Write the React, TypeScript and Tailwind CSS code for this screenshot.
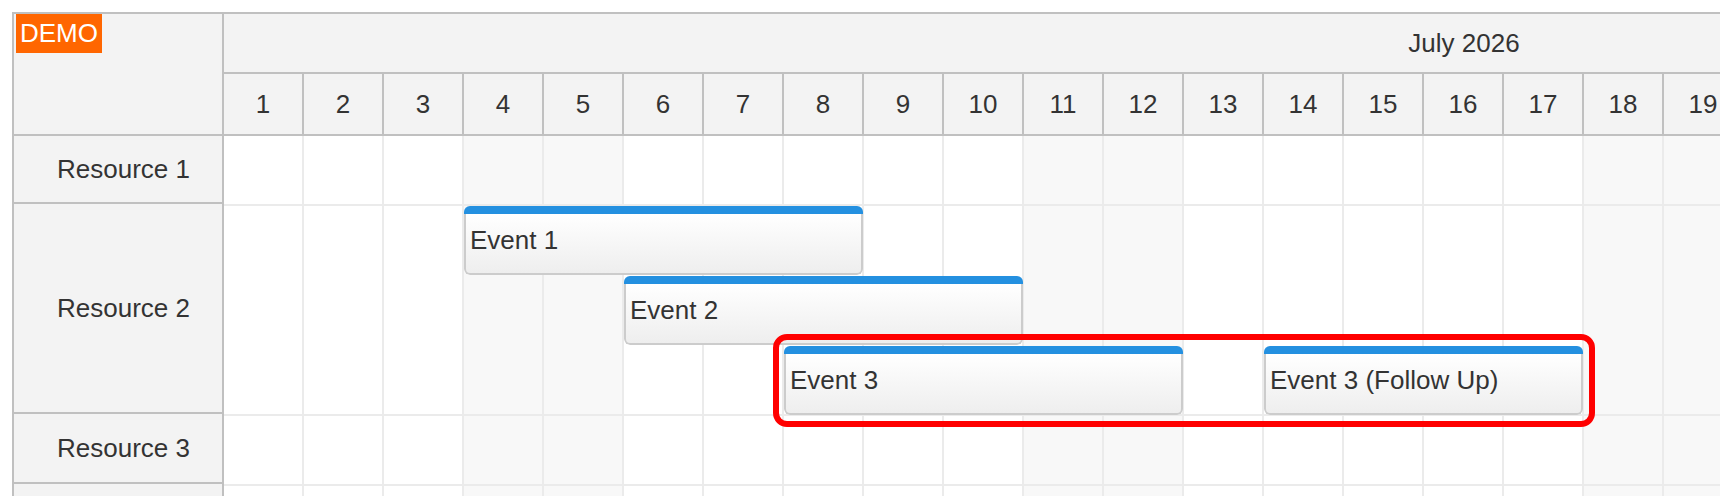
import React from 'react';

type Resource = { id: number; name: string; headerHeight: number; height: number };
type SchedulerEvent = { id: number; text: string; resource: number; lane: number; start: number; end: number };

const CELL_WIDTH = 80;
const LANE_HEIGHT = 70;

const days = Array.from({ length: 31 }, (_, i) => i + 1);

const resources: Resource[] = [
  { id: 1, name: 'Resource 1', headerHeight: 68, height: 70 },
  { id: 2, name: 'Resource 2', headerHeight: 210, height: 210 },
  { id: 3, name: 'Resource 3', headerHeight: 70, height: 70 },
  { id: 4, name: 'Resource 4', headerHeight: 70, height: 70 },
];

const events: SchedulerEvent[] = [
  { id: 1, text: 'Event 1', resource: 2, lane: 0, start: 4, end: 8 },
  { id: 2, text: 'Event 2', resource: 2, lane: 1, start: 6, end: 10 },
  { id: 3, text: 'Event 3', resource: 2, lane: 2, start: 8, end: 12 },
  { id: 4, text: 'Event 3 (Follow Up)', resource: 2, lane: 2, start: 14, end: 17 },
];

// July 2026 starts on a Wednesday
function isWeekend(day: number) {
  return day % 7 === 4 || day % 7 === 5;
}

function rowTop(resourceId: number) {
  let top = 0;
  for (const r of resources) {
    if (r.id === resourceId) break;
    top += r.height;
  }
  return top;
}

export default function App() {
  return (
    <div
      className="h-[496px] w-[1720px] overflow-hidden bg-white pl-[12px] pt-[12px] text-[26px] text-[#333333]"
      style={{ fontFamily: '"Liberation Sans", Arial, sans-serif' }}
    >
      <div className="flex w-max border-l-2 border-t-2 border-[#c0c0c0]">
        {/* row headers */}
        <div className="w-[210px] shrink-0 border-r-2 border-[#c0c0c0] bg-[#f3f3f3]">
          <div className="h-[122px] border-b-2 border-[#c0c0c0] pl-[2px]">
            <div className="inline-flex h-[39px] items-center bg-[#ff6600] px-[4px] text-white">DEMO</div>
          </div>
          {resources.map((r) => (
            <div
              key={r.id}
              className="flex items-center border-b-2 border-[#c0c0c0] pl-[43px]"
              style={{ height: r.headerHeight }}
            >
              {r.name}
            </div>
          ))}
        </div>

        {/* timeline */}
        <div className="shrink-0">
          <div className="flex h-[60px] items-center justify-center border-b-2 border-[#c0c0c0] bg-[#f3f3f3]">
            July 2026
          </div>
          <div className="flex h-[62px] border-b-2 border-[#c0c0c0] bg-[#f3f3f3]">
            {days.map((d) => (
              <div key={d} className="flex w-[80px] shrink-0 items-center justify-center border-r-2 border-[#c0c0c0]">
                {d}
              </div>
            ))}
          </div>

          <div className="relative">
            {resources.map((r) => (
              <div key={r.id} className="flex" style={{ height: r.height }}>
                {days.map((d) => (
                  <div
                    key={d}
                    className={`w-[80px] shrink-0 border-b-2 border-r-2 border-[#ebebeb] ${
                      isWeekend(d) ? 'bg-[#f8f8f8]' : 'bg-white'
                    }`}
                  />
                ))}
              </div>
            ))}

            {events.map((e) => (
              <div
                key={e.id}
                className="absolute flex h-[69px] flex-col overflow-hidden rounded-[6px]"
                style={{
                  left: (e.start - 1) * CELL_WIDTH,
                  top: rowTop(e.resource) + e.lane * LANE_HEIGHT,
                  width: (e.end - e.start + 1) * CELL_WIDTH - 1,
                }}
              >
                <div className="h-[8px] shrink-0 bg-[#2490e0]" />
                <div className="flex flex-1 items-center rounded-b-[6px] border-2 border-t-0 border-[#cccccc] bg-linear-to-b from-[#ffffff] to-[#eeeeee] pb-[7px] pl-[4px] whitespace-nowrap">
                  {e.text}
                </div>
              </div>
            ))}

            <div className="pointer-events-none absolute left-[549px] top-[198px] h-[93px] w-[822px] rounded-[14px] border-[6px] border-[#ff0000]" />
          </div>
        </div>
      </div>
    </div>
  );
}
